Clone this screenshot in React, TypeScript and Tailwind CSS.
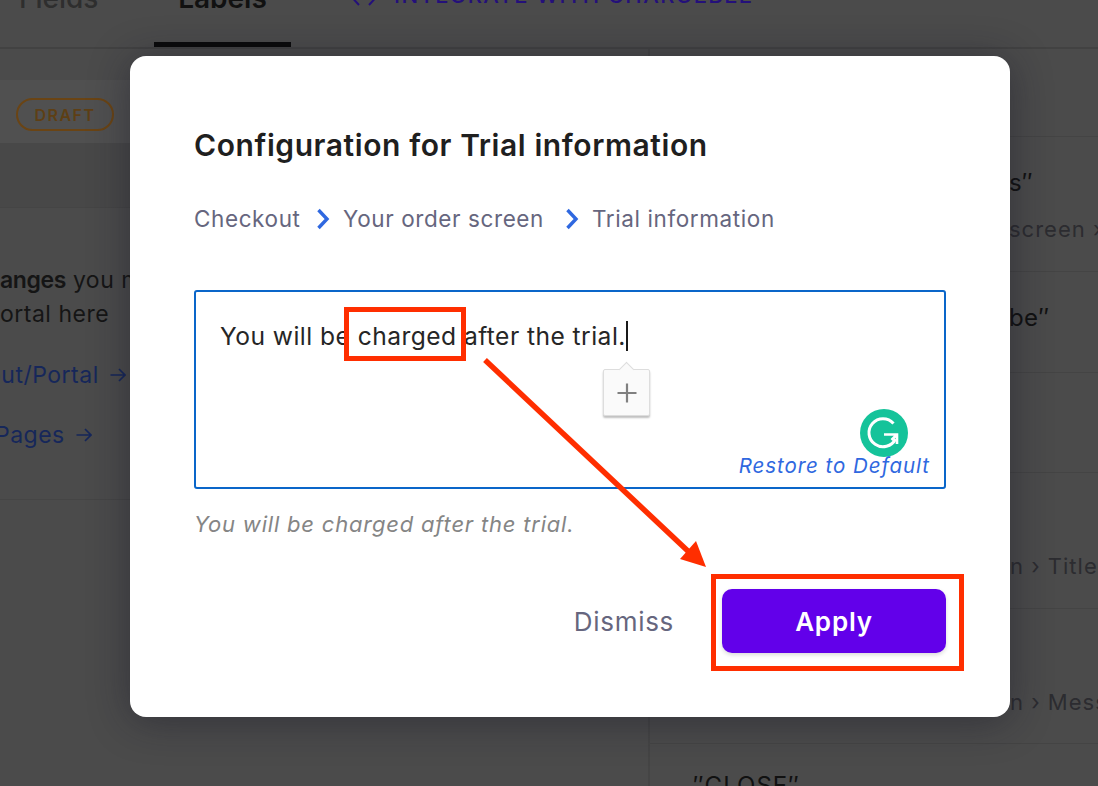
const inter = "font-['Inter',sans-serif]";

function Chevron() {
  return (
    <svg width="14" height="22" viewBox="0 0 14 22" className="shrink-0">
      <path d="M2.5 2 L11 11 L2.5 20" fill="none" stroke="#2f68e0" strokeWidth="3.4" />
    </svg>
  );
}

function SmallArrow() {
  return (
    <svg width="16" height="16" viewBox="0 0 16 16" className="shrink-0">
      <path d="M0.5 8 H15 M9 2 L15 8 L9 14" fill="none" stroke="#16275a" strokeWidth="1.7" />
    </svg>
  );
}

function RightRow({ h, top, sub, pt, subPl, topPl }: { h: string; top?: string; sub?: string; pt: string; subPl?: string; topPl?: string }) {
  return (
    <div className={`${h} ${pt} border-b border-[#444444] overflow-hidden whitespace-nowrap flex flex-col`}>
      {top && <div className={`${topPl} text-[24px] leading-[30px] tracking-[0.4px] text-[#111111]`}>{top}</div>}
      {sub && <div className={`${subPl} mt-[17px] text-[22px] leading-[28px] tracking-[1px] text-[#2c2c30]`}>{sub}</div>}
    </div>
  );
}

export default function App() {
  return (
    <div className={`relative w-[1098px] h-[786px] overflow-hidden bg-[#4b4b4b] ${inter}`}>
      {/* Tabs */}
      <div className="h-[49px] border-b-2 border-[#424242] flex items-start overflow-hidden whitespace-nowrap">
        <div className="pl-[19px] w-[154px] -mt-[18px] text-[28px] leading-[32px] font-medium text-[#2e2e2e]">Fields</div>
        <div className="w-[137px] h-[60px] border-b-[6px] border-[#0a0a0a] -mt-[19px] pt-[1px] text-center text-[28px] leading-[32px] font-semibold text-[#111111] box-content">
          Labels
        </div>
        <div className="ml-[61px] flex items-start text-[#24107a]">
          <svg width="24" height="14" viewBox="0 0 24 14" className="-mt-[8px]">
            <path d="M7 1 L1.5 7 L7 13 M17 1 L22.5 7 L17 13" fill="none" stroke="#24107a" strokeWidth="2" />
          </svg>
          <div className="ml-[18px] -mt-[19px] text-[22px] leading-[28px] font-medium tracking-[1.4px]">INTEGRATE WITH CHARGEBEE</div>
        </div>
      </div>

      <div className="flex h-[737px]">
        {/* Left panel */}
        <div className="w-[650px] border-r-2 border-[#454545]">
          <div className="h-[31px]" />
          <div className="h-[63px] bg-[#505050] flex items-center pl-[16px]">
            <span className="w-[98px] h-[33px] rounded-full border-2 border-[#6a4414] flex items-center justify-center text-[16px] font-semibold tracking-[1.5px] text-[#5e3f14] mt-[6px]">
              DRAFT
            </span>
          </div>
          <div className="h-[64px] bg-[#484848]" />
          <div className="h-[293px] border-t border-[#454545] border-b whitespace-nowrap overflow-hidden text-[23px] tracking-[0.5px]">
            <div className="pt-[55px] leading-[34px] text-[#151515]">
              <b className="font-semibold tracking-[-0.4px]">anges</b> you make
            </div>
            <div className="leading-[34px] text-[#151515]">ortal here</div>
            <div className="mt-[27px] leading-[34px] flex items-center gap-[11px] -ml-[13px] text-[#16275a]">
              out/Portal <SmallArrow />
            </div>
            <div className="mt-[26px] leading-[34px] flex items-center gap-[11px] -ml-[5px] text-[#16275a]">
              Pages <SmallArrow />
            </div>
          </div>
        </div>

        {/* Right panel */}
        <div className="flex-1 min-w-0 overflow-hidden">
          <RightRow h="h-[88px]" pt="" />
          <RightRow h="h-[135px]" pt="pt-[31px]" top={'s″'} topPl="pl-[359px]" sub="screen ›" subPl="pl-[359px]" />
          <RightRow h="h-[101px]" pt="pt-[31px]" top={'be″'} topPl="pl-[359px]" />
          <RightRow h="h-[100px]" pt="" />
          <RightRow h="h-[136px]" pt="pt-[79px]" sub="n › Title" subPl="pl-[360px] !mt-[0px]" />
          <RightRow h="h-[135px]" pt="pt-[79px]" sub="n › Message" subPl="pl-[360px] !mt-[0px]" />
          <div className="pt-[27px] pl-[43px] text-[24px] leading-[30px] tracking-[1px] text-[#111111] whitespace-nowrap">″CLOSE″</div>
        </div>
      </div>

      {/* Modal */}
      <div className="absolute left-[130px] top-[56px] w-[880px] h-[661px] bg-white rounded-[16px] shadow-[0_4px_40px_rgba(20,20,35,0.45)] px-[64px] pt-[69px]">
        <h1 className="text-[30px] leading-[40px] font-semibold text-[#1f1f1f] tracking-[0.58px] whitespace-nowrap">
          Configuration for Trial information
        </h1>
        <div className="mt-[38px] h-[32px] flex items-center text-[22.5px] tracking-[0.6px] text-[#66667e] whitespace-nowrap">
          <span className="w-[122px]">Checkout</span>
          <Chevron />
          <span className="ml-[13px] w-[222px]">Your order screen</span>
          <Chevron />
          <span className="ml-[13px]">Trial information</span>
        </div>

        <div className="relative mt-[55px] h-[199px] w-[752px] rounded-[3px] border-2 border-[#0a66c9] pl-[24px] pt-[26px]">
          <div className="flex items-center h-[36px] text-[24.6px] tracking-[0.45px] text-[#262626] whitespace-nowrap">
            You will be charged after the trial.
            <span className="w-[2px] h-[30px] bg-[#1a1a1a]" />
          </div>

          {/* Grammarly-like add tooltip */}
          <div className="absolute left-[407px] top-[77px] w-[47px] h-[47px] rounded-[2px] bg-[#fafafa] border border-[#dddddd] shadow-[0_2px_2px_rgba(0,0,0,0.25)] flex items-center justify-center">
            <span className="absolute -top-[6px] left-[17px] w-[11px] h-[11px] rotate-45 bg-[#fafafa] border-l border-t border-[#dddddd]" />
            <svg width="20" height="20" viewBox="0 0 20 20">
              <path d="M10 0.5 V19.5 M0.5 10 H19.5" stroke="#808080" strokeWidth="2.2" />
            </svg>
          </div>

          {/* Grammarly badge */}
          <svg width="48" height="48" viewBox="0 0 48 48" className="absolute left-[664px] top-[117px]">
            <circle cx="24" cy="24" r="24" fill="#15c39a" />
            <path d="M33.5 14.5 A14 14 0 1 0 35.5 30" fill="none" stroke="#ffffff" strokeWidth="3" />
            <path d="M24 25.5 H37 V35 M37 25.5 L31.5 31" fill="none" stroke="#ffffff" strokeWidth="2.6" />
          </svg>

          <span className="absolute right-[14px] bottom-[8px] text-[20.5px] leading-[26px] italic text-[#2f68e0] tracking-[0.95px] whitespace-nowrap">
            Restore to Default
          </span>
        </div>

        <p className="mt-[20px] h-[30px] leading-[30px] text-[22px] tracking-[0.8px] italic text-[#858585] whitespace-nowrap">
          You will be charged after the trial.
        </p>

        <div className="mt-[50px] flex items-center justify-end">
          <span className="mr-[48px] text-[26px] tracking-[0.7px] text-[#66667e]">Dismiss</span>
          <button className="w-[224px] h-[64px] rounded-[10px] bg-[#6200ea] text-white text-[26px] tracking-[0.8px] font-semibold shadow-[0_2px_4px_rgba(0,0,0,0.15)]">
            Apply
          </button>
        </div>
      </div>

      {/* Red annotations */}
      <svg width="1098" height="786" viewBox="0 0 1098 786" className="absolute inset-0 pointer-events-none">
        <rect x="346.5" y="309.5" width="117" height="49" fill="none" stroke="#ff2e00" strokeWidth="5" />
        <rect x="713.5" y="576.5" width="248" height="92" fill="none" stroke="#ff2e00" strokeWidth="5" />
        <path d="M485 360 L690 553" stroke="#ff2e00" strokeWidth="5.5" fill="none" />
        <path d="M706 567 L696 541 L680 559 Z" fill="#ff2e00" />
      </svg>
    </div>
  );
}
